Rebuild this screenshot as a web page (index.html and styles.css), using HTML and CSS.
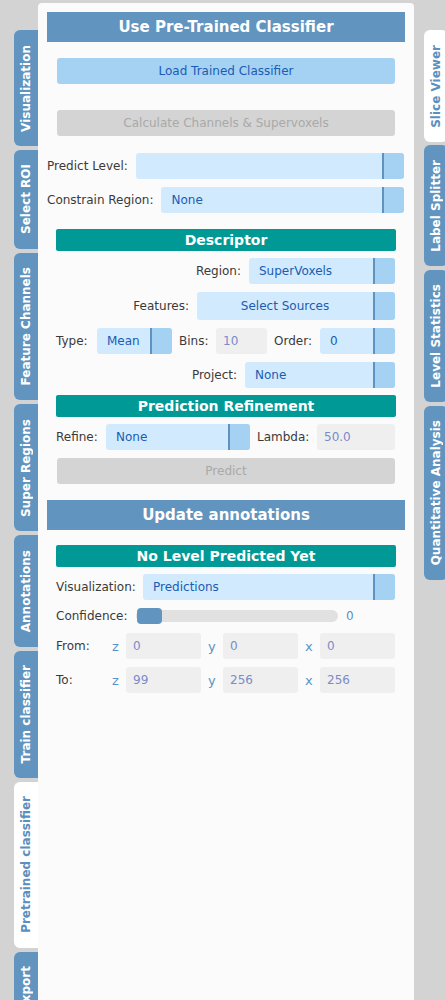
FILE: index.html
```html
<!DOCTYPE html>
<html>
<head>
<meta charset="utf-8">
<link rel="stylesheet" href="styles.css">
</head>
<body>
<div class="app">
  <nav class="tabs tabs-left">
    <div class="tab"><span>Visualization</span></div>
    <div class="tab"><span>Select ROI</span></div>
    <div class="tab"><span>Feature Channels</span></div>
    <div class="tab"><span>Super Regions</span></div>
    <div class="tab"><span>Annotations</span></div>
    <div class="tab"><span>Train classifier</span></div>
    <div class="tab active"><span>Pretrained classifier</span></div>
    <div class="tab"><span>Export</span></div>
  </nav>

  <main class="panel">
    <h1 class="title">Use Pre-Trained Classifier</h1>
    <div class="btn btn-primary btn-load">Load Trained Classifier</div>
    <div class="btn btn-disabled btn-calc">Calculate Channels &amp; Supervoxels</div>

    <div class="row row-wide row-predict">
      <span class="label">Predict Level:</span>
      <div class="select grow"><span class="val"></span><span class="arrow"></span></div>
    </div>
    <div class="row row-wide row-constrain">
      <span class="label">Constrain Region:</span>
      <div class="select grow"><span class="val">None</span><span class="arrow"></span></div>
    </div>

    <section class="sub">
      <h2 class="band band-descriptor">Descriptor</h2>
      <div class="row row-end row-region">
        <span class="label">Region:</span>
        <div class="select w-region"><span class="val">SuperVoxels</span><span class="arrow"></span></div>
      </div>
      <div class="row row-end row-features">
        <span class="label">Features:</span>
        <div class="select w-features tall"><span class="val center">Select Sources</span><span class="arrow"></span></div>
      </div>
      <div class="row row-type">
        <span class="label l-type">Type:</span>
        <div class="select w-small"><span class="val">Mean</span><span class="arrow"></span></div>
        <span class="label l-bins">Bins:</span>
        <div class="input w-bins">10</div>
        <span class="label l-order">Order:</span>
        <div class="select w-small"><span class="val">0</span><span class="arrow"></span></div>
      </div>
      <div class="row row-end row-project">
        <span class="label">Project:</span>
        <div class="select w-project"><span class="val">None</span><span class="arrow"></span></div>
      </div>
      <h2 class="band band-refine">Prediction Refinement</h2>
      <div class="row row-refine">
        <span class="label l-refine">Refine:</span>
        <div class="select w-refine"><span class="val">None</span><span class="arrow"></span></div>
        <span class="label l-lambda">Lambda:</span>
        <div class="input w-lambda">50.0</div>
      </div>
      <div class="btn btn-disabled btn-predict">Predict</div>
    </section>

    <h1 class="title title-update">Update annotations</h1>

    <section class="sub">
      <h2 class="band band-nolevel">No Level Predicted Yet</h2>
      <div class="row row-vis">
        <span class="label l-vis">Visualization:</span>
        <div class="select grow"><span class="val">Predictions</span><span class="arrow"></span></div>
      </div>
      <div class="row row-conf">
        <span class="label l-conf">Confidence:</span>
        <div class="slider"><span class="thumb"></span></div>
        <span class="slider-val">0</span>
      </div>
      <div class="row row-range row-from">
        <span class="label l-range">From:</span>
        <span class="axis ax-z">z</span>
        <div class="input w-coord">0</div>
        <span class="axis">y</span>
        <div class="input w-coord">0</div>
        <span class="axis">x</span>
        <div class="input w-coord">0</div>
      </div>
      <div class="row row-range row-to">
        <span class="label l-range">To:</span>
        <span class="axis ax-z">z</span>
        <div class="input w-coord">99</div>
        <span class="axis">y</span>
        <div class="input w-coord">256</div>
        <span class="axis">x</span>
        <div class="input w-coord">256</div>
      </div>
    </section>
  </main>

  <nav class="tabs tabs-right">
    <div class="tab active"><span>Slice Viewer</span></div>
    <div class="tab"><span>Label Splitter</span></div>
    <div class="tab"><span>Level Statistics</span></div>
    <div class="tab"><span>Quantitative Analysis</span></div>
  </nav>
</div>
</body>
</html>
```

FILE: styles.css
```css
* { box-sizing: border-box; margin: 0; padding: 0; }

html, body {
  width: 445px;
  height: 1000px;
  overflow: hidden;
  background: #d3d3d3;
  font-family: "DejaVu Sans", "Liberation Sans", sans-serif;
  font-size: 12px;
  color: #3a3a3a;
}

.app {
  display: flex;
  height: 1000px;
}

/* ---------- side tabs ---------- */
.tabs {
  display: flex;
  flex-direction: column;
  align-self: flex-start;
  margin-top: 30px;
}
.tabs-left {
  width: 38px;
  padding-left: 14px;
  gap: 4px;
}
.tabs-right {
  width: 24px;
  margin-left: 10px;
  gap: 3.5px;
  flex-shrink: 0;
}
.tab {
  width: 24px;
  display: flex;
  align-items: center;
  justify-content: center;
  padding: 14.5px 0;
  background: #6195bf;
  color: #ffffff;
  font-weight: bold;
  font-size: 12px;
  border-radius: 6px 0 0 6px;
}
.tabs-right .tab {
  border-radius: 6px;
}
.tab span {
  display: block;
  writing-mode: vertical-rl;
  transform: rotate(180deg);
  line-height: 14px;
  white-space: nowrap;
}
.tab.active {
  background: #ffffff;
  color: #5b8fc0;
}

/* ---------- panel ---------- */
.panel {
  width: 376px;
  flex-shrink: 0;
  margin-top: 3px;
  padding: 9px 9px 0;
  background: #fbfbfb;
  border-radius: 4px 4px 0 0;
}

.title {
  height: 30px;
  line-height: 30px;
  background: #6195bf;
  color: #ffffff;
  font-size: 15px;
  font-weight: bold;
  text-align: center;
}
.title-update { margin-top: 16px; }

.btn {
  height: 26px;
  line-height: 26px;
  text-align: center;
  border-radius: 3px;
  font-size: 12px;
}
.btn-primary { background: #a5d1f3; color: #1b5cb2; }
.btn-disabled { background: #d4d4d4; color: #a9a9a9; }
.btn-load { margin: 16px 10px 0; }
.btn-calc { margin: 26px 10px 0; }
.btn-predict { margin: 8px 1px 0; }

.row {
  display: flex;
  align-items: center;
  height: 26px;
}
.row-wide { gap: 8px; margin-right: 1px; }
.row-predict { margin-top: 17px; }
.row-constrain { margin-top: 8px; }
.row-end { justify-content: flex-end; gap: 8px; margin-right: 1px; }

.label { white-space: nowrap; color: #3a3a3a; }

.select {
  display: flex;
  height: 26px;
  border-radius: 3px;
  background: #d1eafd;
  overflow: hidden;
  color: #1b5cb2;
}
.select.tall { height: 28px; }
.select .val {
  flex: 1;
  padding-left: 10px;
  display: flex;
  align-items: center;
  white-space: nowrap;
}
.select .val.center { justify-content: center; padding-left: 0; }
.select .arrow {
  width: 22px;
  border-left: 2px solid #5f92bd;
  background: #a5d1f3;
}
.grow { flex: 1; }

.input {
  height: 26px;
  line-height: 26px;
  padding-left: 7px;
  border-radius: 3px;
  background: #efefef;
  color: #7a8bc9;
}

/* ---------- sub sections ---------- */
.sub { padding: 0 9px; }

.band {
  height: 22px;
  line-height: 22px;
  background: #009995;
  color: #ffffff;
  font-size: 14px;
  font-weight: bold;
  text-align: center;
  border-radius: 2px;
}
.band-descriptor { margin-top: 16px; }
.band-refine { margin-top: 7px; }
.band-nolevel { margin-top: 15px; }

.row-region { margin-top: 7px; }
.row-features { margin-top: 8px; height: 28px; }
.row-type { margin-top: 8px; margin-right: 1px; }
.row-project { margin-top: 8px; }
.row-refine { margin-top: 7px; margin-right: 1px; }

.w-region { width: 146px; }
.w-features { width: 198px; }
.w-project { width: 150px; }
.w-small { width: 75px; }
.w-bins { width: 51px; }
.w-refine { width: 144px; }
.w-lambda { width: 78px; }
.w-coord { width: 75px; }

.l-type { width: 41px; }
.l-bins { width: 37px; margin-left: 7px; }
.l-order { width: 46px; margin-left: 7px; }
.l-refine { width: 50px; }
.l-lambda { width: 60px; margin-left: 7px; }

.row-vis { margin-top: 7px; margin-right: 1px; }
.l-vis { width: 87px; }

.row-conf { margin-top: 8px; height: 16px; }
.l-conf { width: 80px; }
.slider {
  position: relative;
  width: 202px;
  height: 12px;
  border-radius: 6px;
  background: #e1e1e1;
}
.thumb {
  position: absolute;
  left: 1px;
  top: -2px;
  width: 25px;
  height: 16px;
  border-radius: 4px;
  background: #6195bf;
}
.slider-val { margin-left: 8px; color: #5a8fc7; }

.row-range { margin-right: 1px; }
.row-from { margin-top: 9px; }
.row-to { margin-top: 8px; }
.l-range { width: 56px; }
.axis {
  width: 15px;
  margin-left: 7px;
  color: #5a93c8;
  font-size: 13px;
}
.axis.ax-z { width: 14px; margin-left: 0; }
```
